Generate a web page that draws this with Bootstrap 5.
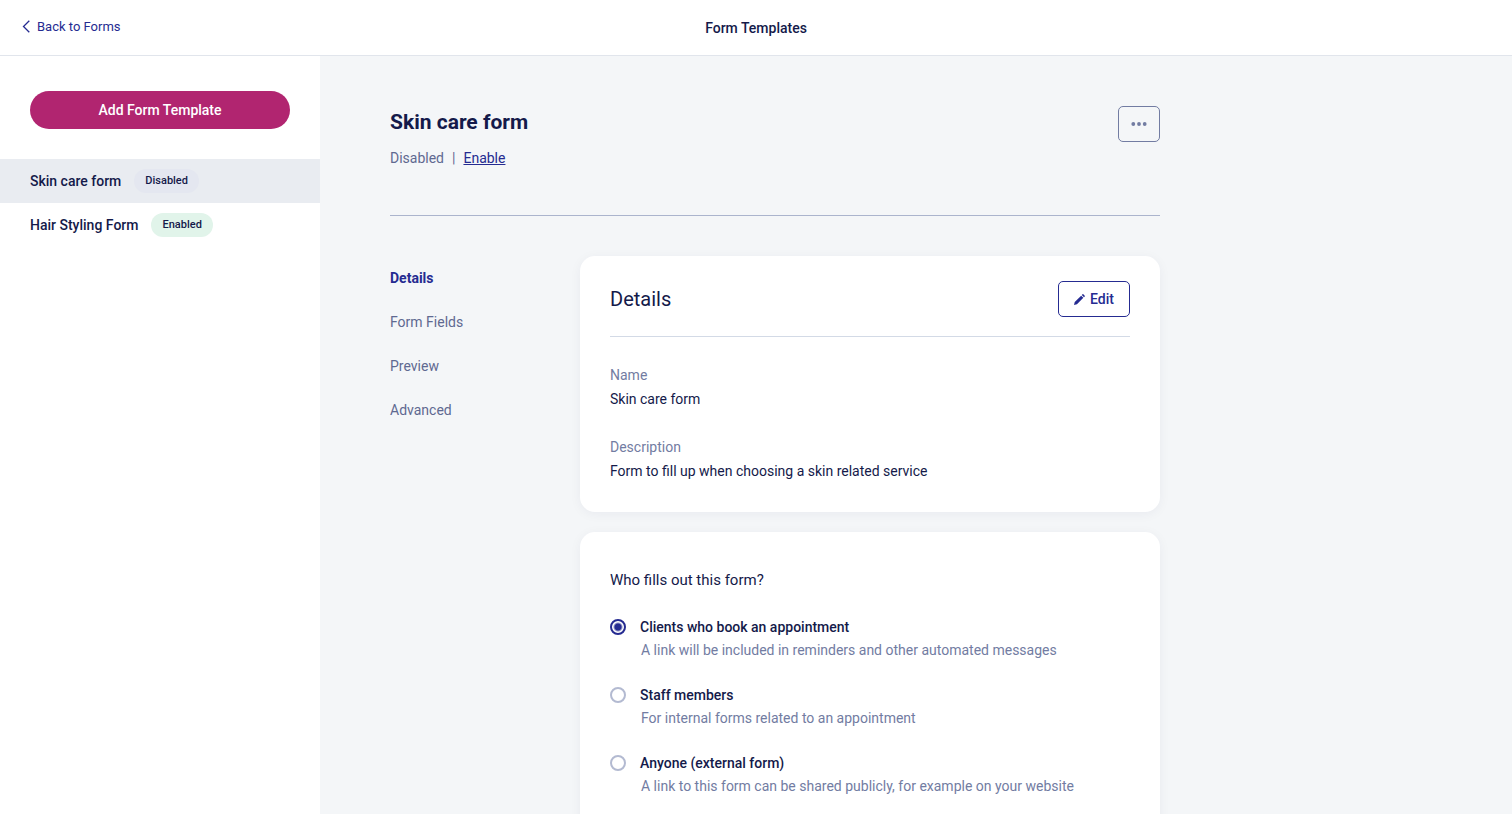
<!DOCTYPE html>
<html lang="en">
<head>
<meta charset="utf-8">
<meta name="viewport" content="width=device-width, initial-scale=1">
<title>Form Templates</title>
<link href="https://cdn.jsdelivr.net/npm/bootstrap@5.3.0/dist/css/bootstrap.min.css" rel="stylesheet">
<style>
  :root { --ink: #141a4a; --brand: #252b91; --muted: #727ca2; --slate: #5f6991; --magenta: #b12570; }
  body { font-family: Roboto, "Liberation Sans", sans-serif; font-size: 14px; line-height: 24px; color: var(--ink); background: #f4f6f8; }
  a { color: var(--brand); }
  .topbar { height: 56px; padding: 0 22px; border-bottom: 1px solid #e1e5ec; }
  .back-link { font-size: 13px; gap: 7px; }
  .fw-mid { font-weight: 500; }
  .sidebar { flex: 0 0 320px; padding-top: 35px; }
  .sidebar .btn-add { margin: 0 30px 30px; height: 38px; background: var(--magenta); color: #fff; font-size: 14px; font-weight: 500; line-height: 24px; }
  .form-link { height: 44px; padding: 0 30px; gap: 13px; color: var(--ink); font-weight: 500; }
  .form-link.active { background: #e9ecf1; }
  .pill { font-size: 11px; line-height: 24px; font-weight: 500; padding: 0 11px; background: #e4e7f0; }
  .pill-on { background: #e1f4ea; }
  .content-pane { overflow-y: auto; scrollbar-width: none; padding: 50px 70px; }
  .content-pane::-webkit-scrollbar { display: none; }
  .content-wrap { max-width: 770px; }
  .page-head { padding-bottom: 45px; margin-bottom: 40px; border-bottom: 1px solid #abb4cd; color: var(--slate); }
  .page-head h1 { font-size: 21px; line-height: 32px; font-weight: 700; margin-bottom: 8px; color: var(--ink); }
  .btn-line { height: 36px; border: 1px solid var(--brand); border-radius: 5px; color: var(--brand); font-size: 14px; line-height: 24px; font-weight: 500; padding: 0 15px; gap: 5px; }
  .btn-more { width: 42px; padding: 0; border-color: var(--muted); color: var(--muted); }
  .section-nav { flex: 0 0 190px; }
  .section-nav .nav-link { padding: 10px 0; color: var(--slate); }
  .section-nav .nav-link.active { color: var(--brand); font-weight: 700; }
  .panels { row-gap: 20px; }
  .panel { background: #fff; border-radius: 15px; padding: 25px 30px 29px; box-shadow: 0 2px 12px rgba(16,24,69,.05); }
  .panel-head { padding-bottom: 19px; margin-bottom: 26px; border-bottom: 1px solid #d3dae6; }
  .panel-head h2 { font-size: 20px; line-height: 28px; font-weight: 400; }
  dt, .hint { font-weight: 400; color: var(--muted); }
  dd + dt { margin-top: 24px; }
  .question { font-size: 15px; line-height: 24px; padding-top: 11px; margin-bottom: 23px; }
  .option { display: grid; grid-template-columns: 16px 1fr; column-gap: 14px; margin-bottom: 22px; align-items: center; }
  .option label { font-weight: 500; }
  .option .hint { grid-column: 2; line-height: 22px; padding-left: 1px; }
  .option input { appearance: none; width: 16px; height: 16px; margin: 0; border: 2px solid #b3bad1; border-radius: 50%; background: #fff; }
  .option input:checked { border-color: var(--brand); background: radial-gradient(circle, var(--brand) 3px, #fff 5px); }
</style>
</head>
<body class="vh-100 d-flex flex-column overflow-hidden">
<header class="topbar bg-white d-flex align-items-center flex-shrink-0">
  <div class="col"><a href="#" class="back-link text-decoration-none d-inline-flex align-items-center"><svg width="8" height="13" viewBox="0 0 8 13" fill="none" stroke="currentColor" stroke-width="1.300" aria-hidden="true"><path d="M7.300.7 1.500 6.500l5.800 5.800"/></svg>Back to Forms</a></div>
  <div class="col-auto fw-mid">Form Templates</div>
  <div class="col"></div>
</header>
<div class="d-flex flex-grow-1 overflow-hidden">
  <aside class="sidebar bg-white d-flex flex-column">
    <button type="button" class="btn btn-add rounded-pill border-0 py-0">Add Form Template</button>
    <a href="#" class="form-link active d-flex align-items-center text-decoration-none">Skin care form <span class="pill rounded-pill">Disabled</span></a>
    <a href="#" class="form-link d-flex align-items-center text-decoration-none">Hair Styling Form <span class="pill pill-on rounded-pill">Enabled</span></a>
  </aside>
  <main class="content-pane flex-grow-1">
    <div class="content-wrap">
      <div class="page-head d-flex justify-content-between align-items-start">
        <div>
          <h1>Skin care form</h1>
          <div class="d-flex gap-2"><span>Disabled</span><span>|</span><a href="#">Enable</a></div>
        </div>
        <button type="button" class="btn btn-line btn-more d-flex align-items-center justify-content-center" aria-label="More actions"><svg width="16" height="4" viewBox="0 0 16 4" fill="currentColor" aria-hidden="true"><circle cx="2.300" cy="2" r="1.900"/><circle cx="8" cy="2" r="1.900"/><circle cx="13.700" cy="2" r="1.900"/></svg></button>
      </div>
      <div class="d-flex align-items-start">
        <nav class="section-nav nav flex-column">
          <a class="nav-link active" href="#">Details</a>
          <a class="nav-link" href="#">Form Fields</a>
          <a class="nav-link" href="#">Preview</a>
          <a class="nav-link" href="#">Advanced</a>
        </nav>
        <div class="panels flex-grow-1 d-grid">
          <section class="panel">
            <div class="panel-head d-flex justify-content-between align-items-center">
              <h2 class="mb-0">Details</h2>
              <button type="button" class="btn btn-line d-flex align-items-center"><svg width="11" height="11" viewBox="0 0 12 12" fill="currentColor" aria-hidden="true"><path d="M0 12 .8 8.800 7.800 1.800 10.200 4.200 3.200 11.200ZM8.500 1.100 9.300.3Q9.700-.1 10.200.3L11.700 1.800Q12.100 2.300 11.700 2.700L10.900 3.500Z"/></svg>Edit</button>
            </div>
            <dl class="mb-0">
              <dt>Name</dt><dd class="mb-0">Skin care form</dd>
              <dt>Description</dt><dd class="mb-0">Form to fill up when choosing a skin related service</dd>
            </dl>
          </section>
          <section class="panel">
            <h2 class="question fw-normal">Who fills out this form?</h2>
            <div class="option"><input type="radio" name="filler" id="clients" checked><label for="clients">Clients who book an appointment</label><div class="hint">A link will be included in reminders and other automated messages</div></div>
            <div class="option"><input type="radio" name="filler" id="staff"><label for="staff">Staff members</label><div class="hint">For internal forms related to an appointment</div></div>
            <div class="option"><input type="radio" name="filler" id="anyone"><label for="anyone">Anyone (external form)</label><div class="hint">A link to this form can be shared publicly, for example on your website</div></div>
          </section>
        </div>
      </div>
    </div>
  </main>
</div>
<script src="https://cdn.jsdelivr.net/npm/bootstrap@5.3.0/dist/js/bootstrap.bundle.min.js"></script>
</body>
</html>
